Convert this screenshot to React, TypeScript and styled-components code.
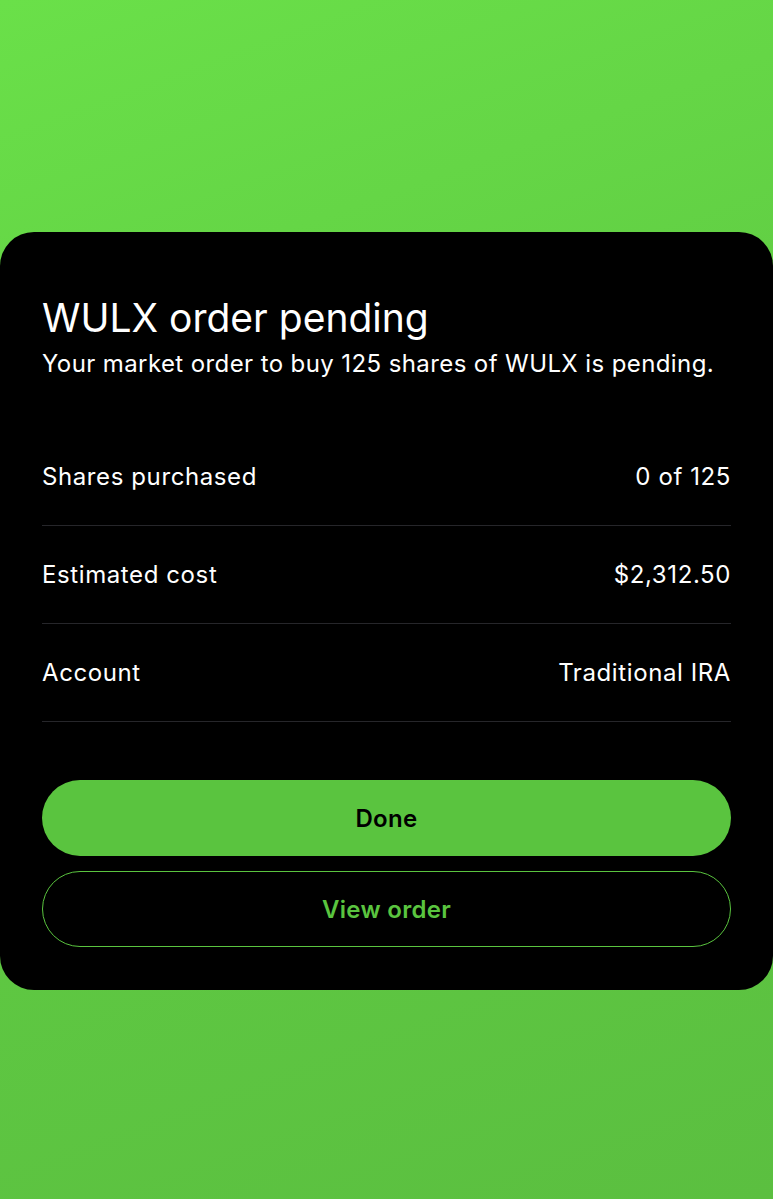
import React from "react";
import styled, { createGlobalStyle } from "styled-components";

const Global = createGlobalStyle`
  html, body { margin: 0; padding: 0; }
  body {
    font-family: Inter, "Noto Sans", "Liberation Sans", sans-serif;
    -webkit-font-smoothing: antialiased;
  }
  * { box-sizing: border-box; }
`;

const Page = styled.div`
  min-height: 1199px;
  padding-top: 232px;
  background: linear-gradient(160deg, #6ae049 0%, #60cc43 45%, #5bbf40 100%);
`;

const Card = styled.section`
  background: #000;
  border-radius: 34px;
  padding: 62px 42px 43px;
  color: #fff;
`;

const Title = styled.h1`
  margin: 0;
  font-size: 39px;
  line-height: 48px;
  font-weight: 400;
  letter-spacing: 0;
`;

const Subtitle = styled.p`
  margin: 6px 0 0;
  font-size: 24px;
  line-height: 32px;
  font-weight: 400;
  letter-spacing: 0.4px;
`;

const Rows = styled.div`
  margin-top: 48px;
  display: flex;
  flex-direction: column;
`;

const Row = styled.div`
  display: flex;
  justify-content: space-between;
  align-items: center;
  padding: 35px 0;
  border-bottom: 1px solid #26262a;
  font-size: 24px;
  line-height: 27px;
  letter-spacing: 0.6px;
`;

const Actions = styled.div`
  margin-top: 58px;
  display: flex;
  flex-direction: column;
  gap: 15px;
`;

const Button = styled.button<{ $variant: "solid" | "outline" }>`
  height: 76px;
  border-radius: 38px;
  font-family: inherit;
  font-size: 24px;
  font-weight: 600;
  letter-spacing: 0.3px;
  cursor: pointer;
  background: ${(p) => (p.$variant === "solid" ? "#5ac43f" : "transparent")};
  color: ${(p) => (p.$variant === "solid" ? "#000" : "#5ac43f")};
  border: ${(p) => (p.$variant === "solid" ? "none" : "1.5px solid #5ac43f")};
`;

const rows = [
  ["Shares purchased", "0 of 125"],
  ["Estimated cost", "$2,312.50"],
  ["Account", "Traditional IRA"],
];

export default function App() {
  return (
    <>
      <Global />
      <Page>
        <Card>
          <Title>WULX order pending</Title>
          <Subtitle>Your market order to buy 125 shares of WULX is pending.</Subtitle>
          <Rows>
            {rows.map(([k, v]) => (
              <Row key={k}>
                <span>{k}</span>
                <span>{v}</span>
              </Row>
            ))}
          </Rows>
          <Actions>
            <Button $variant="solid">Done</Button>
            <Button $variant="outline">View order</Button>
          </Actions>
        </Card>
      </Page>
    </>
  );
}
